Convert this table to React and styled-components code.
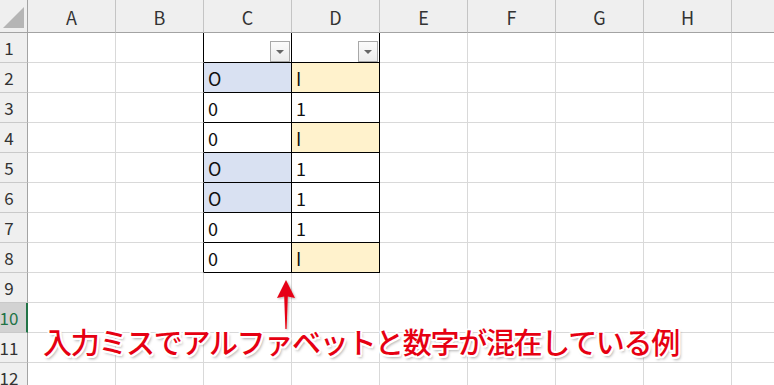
import React from 'react'
import styled, {createGlobalStyle} from 'styled-components'

const GlobalStyle = createGlobalStyle`
  html, body {
    margin: 0;
    padding: 0;
    background: #fff;
    overflow: hidden;
  }
  body {
    font-family: "Noto Sans CJK JP", "Noto Sans", sans-serif;
  }
`

const Sheet = styled.div`
  position: relative;
  width: 774px;
  height: 385px;
  overflow: hidden;
`

const Grid = styled.div`
  display: grid;
  grid-template-columns: 28px repeat(9, 88px);
  grid-template-rows: 33px;
  grid-auto-rows: 30px;
`

const Corner = styled.div`
  box-sizing: border-box;
  background: #efefef;
  border-right: 1px solid #a3a3a3;
  border-bottom: 1px solid #a3a3a3;
  padding: 7px 0 0 3px;

  &::after {
    content: '';
    display: block;
    width: 21px;
    height: 21px;
    background: #b5b5b5;
    clip-path: polygon(100% 0, 100% 100%, 0 100%);
  }
`

const ColHead = styled.div`
  box-sizing: border-box;
  background: #efefef;
  border-right: 1px solid #c4c4c4;
  border-bottom: 1px solid #a3a3a3;
  display: flex;
  align-items: center;
  justify-content: center;
  font-size: 18px;
  color: #333;
  padding-top: 1px;
`

const RowHead = styled.div`
  box-sizing: border-box;
  background: ${p => (p.$active ? '#d2d2d2' : '#efefef')};
  border-right: ${p => (p.$active ? '2px solid #217346' : '1px solid #a3a3a3')};
  border-bottom: 1px solid #c9c9c9;
  display: flex;
  align-items: center;
  justify-content: center;
  padding-right: ${p => (p.$active ? '8px' : '9px')};
  font-size: 17px;
  color: ${p => (p.$active ? '#217346' : '#333')};
`

const Cell = styled.div`
  box-sizing: border-box;
  background: ${p => p.$fill || '#fff'};
  border-right: 1px solid ${p => (p.$rb ? '#000' : '#d9d9d9')};
  border-bottom: 1px solid ${p => (p.$bb ? '#000' : '#d9d9d9')};
  display: flex;
  align-items: center;
  padding-left: 4px;
  font-size: 18px;
  color: #111;
`

const FilterCell = styled(Cell)`
  justify-content: flex-end;
  align-items: flex-end;
  padding: 0 1px 0 0;
`

const FilterButton = styled.div`
  box-sizing: border-box;
  width: 20px;
  height: 21px;
  border: 1px solid #a8a8a8;
  background: linear-gradient(#fbfbfb, #ececec);
  display: flex;
  align-items: center;
  justify-content: center;

  &::after {
    content: '';
    border-left: 4px solid transparent;
    border-right: 4px solid transparent;
    border-top: 4px solid #666;
    margin-top: 1px;
  }
`

const Callout = styled.div`
  position: absolute;
  left: 43px;
  top: 327px;
  font-size: 29px;
  line-height: 1;
  font-weight: 500;
  letter-spacing: -1.3px;
  color: #e60012;
  white-space: nowrap;
  text-shadow:
    2px 0 0 #fff, -2px 0 0 #fff, 0 2px 0 #fff, 0 -2px 0 #fff,
    1.5px 1.5px 0 #fff, -1.5px 1.5px 0 #fff, 1.5px -1.5px 0 #fff, -1.5px -1.5px 0 #fff,
    2px 3px 3px rgba(0, 0, 0, 0.35);
`

const Arrow = styled.svg`
  position: absolute;
  left: 274px;
  top: 277px;
  overflow: visible;
`

const letters = ['A', 'B', 'C', 'D', 'E', 'F', 'G', 'H', '']

// values of columns C and D, rows 2-8
const table = [
  [{t: 'O', fill: '#d9e1f2'}, {t: 'I', fill: '#fff2cc'}],
  [{t: '0'}, {t: '1'}],
  [{t: '0'}, {t: 'I', fill: '#fff2cc'}],
  [{t: 'O', fill: '#d9e1f2'}, {t: '1'}],
  [{t: 'O', fill: '#d9e1f2'}, {t: '1'}],
  [{t: '0'}, {t: '1'}],
  [{t: '0'}, {t: 'I', fill: '#fff2cc'}],
]

const ROWS = 12
const ACTIVE_ROW = 10

const renderRow = r => {
  const inTable = r <= 8
  const cells = [<RowHead key='h' $active={r === ACTIVE_ROW}>{r}</RowHead>]
  letters.forEach(col => {
    const key = col || 'I'
    if (inTable && (col === 'C' || col === 'D')) {
      if (r === 1) {
        cells.push(
          <FilterCell key={key} $rb $bb>
            <FilterButton />
          </FilterCell>
        )
      } else {
        const v = table[r - 2][col === 'C' ? 0 : 1]
        cells.push(
          <Cell key={key} $rb $bb $fill={v.fill}>
            {v.t}
          </Cell>
        )
      }
    } else {
      cells.push(<Cell key={key} $rb={inTable && col === 'B'} />)
    }
  })
  return cells
}

export default function App() {
  const rows = []
  for (let r = 1; r <= ROWS; r++) rows.push(...renderRow(r))

  return (
    <>
      <GlobalStyle />
      <Sheet>
        <Grid>
          <Corner />
          {letters.map((l, i) => (
            <ColHead key={i}>{l}</ColHead>
          ))}
          {rows}
        </Grid>

        <Arrow width='24' height='56' viewBox='0 0 24 56'>
          <defs>
            <filter id='arrowShadow' x='-50%' y='-20%' width='200%' height='150%'>
              <feDropShadow dx='1' dy='1' stdDeviation='0.8' floodColor='#000' floodOpacity='0.3' />
            </filter>
          </defs>
          <g filter='url(#arrowShadow)' fill='#e60012'>
            <path d='M12 3 L21 21 L13.8 19.5 L12.6 52 L11.4 52 L10.2 19.5 L3 21 Z' />
          </g>
        </Arrow>

        <Callout>入力ミスでアルファベットと数字が混在している例</Callout>
      </Sheet>
    </>
  )
}
